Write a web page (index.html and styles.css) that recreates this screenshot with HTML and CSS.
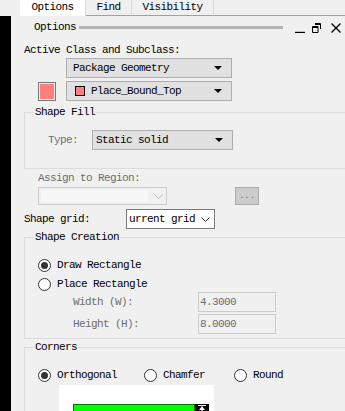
FILE: index.html
```html
<!DOCTYPE html>
<html lang="en">
<head>
    <meta charset="UTF-8">
    <title>Options</title>
    <link rel="stylesheet" href="styles.css">
</head>
<body>
    <div class="tabbar">
        <div class="tab active" style="width: 66px">Options</div>
        <div class="tab" style="width: 46px">Find</div>
        <div class="tab" style="width: 82px">Visibility</div>
        <div class="tab-rest"></div>
    </div>
    <div class="main">
        <div class="side"></div>
        <div class="panel">
            <!-- panel title bar -->
            <div class="titlebar">
                <span class="title-text">Options</span>
                <div class="grip"></div>
                <svg class="tb-icon" width="10" height="10" viewBox="0 0 10 10"><path d="M0 9.5h10" stroke="#000" stroke-width="1.4"/></svg>
                <svg class="tb-icon restore" width="9" height="10" viewBox="0 0 9 10"><path d="M3 0.5h5.5v5.5M0.5 3.5h5.5v6h-5.5z" fill="none" stroke="#000"/><path d="M0.5 4.5h5.5M3 1.5h5.5" stroke="#000"/></svg>
                <svg class="tb-icon close" width="10" height="10" viewBox="0 0 10 10"><path d="M0.5 0.5l9 9M9.5 0.5l-9 9" stroke="#000" stroke-width="1.3"/></svg>
            </div>

            <div class="label active-label">Active Class and Subclass:</div>
            <div class="row class-row">
                <div class="dropdown w166"><span>Package Geometry</span><svg class="arrow" width="8" height="4" viewBox="0 0 8 4"><path d="M0 0h8L4 4z"/></svg></div>
            </div>
            <div class="row subclass-row">
                <div class="swatch"></div>
                <div class="dropdown w166"><span class="mini-swatch"></span><span>Place_Bound_Top</span><svg class="arrow" width="8" height="4" viewBox="0 0 8 4"><path d="M0 0h8L4 4z"/></svg></div>
            </div>

            <div class="group fill-group">
                <div class="group-title">Shape Fill</div>
                <div class="row type-row">
                    <span class="label dim type-label">Type:</span>
                    <div class="dropdown w141"><span>Static solid</span><svg class="arrow" width="8" height="4" viewBox="0 0 8 4"><path d="M0 0h8L4 4z"/></svg></div>
                </div>
            </div>

            <div class="label dim region-label">Assign to Region:</div>
            <div class="row region-row">
                <div class="combo disabled">
                    <div class="combo-field"></div>
                    <svg class="chevron" width="9" height="5" viewBox="0 0 9 5"><path d="M0.5 0.5l4 4 4-4" fill="none" stroke="#b8b8b8"/></svg>
                </div>
                <div class="dots-btn">...</div>
            </div>

            <div class="row grid-row">
                <span class="label grid-label">Shape grid:</span>
                <div class="combo grid-combo">
                    <span class="combo-text">urrent grid</span>
                    <svg class="chevron" width="9" height="5" viewBox="0 0 9 5"><path d="M0.5 0.5l4 4 4-4" fill="none" stroke="#333"/></svg>
                </div>
            </div>

            <div class="group creation-group">
                <div class="group-title">Shape Creation</div>
                <div class="row radio-row first">
                    <span class="radio checked"></span><span>Draw Rectangle</span>
                </div>
                <div class="row radio-row second">
                    <span class="radio"></span><span>Place Rectangle</span>
                </div>
                <div class="row size-row">
                    <span class="label dim size-label">Width (W):</span>
                    <div class="num-input">4.3000</div>
                </div>
                <div class="row size-row second">
                    <span class="label dim size-label">Height (H):</span>
                    <div class="num-input">8.0000</div>
                </div>
            </div>

            <div class="group corners-group">
                <div class="group-title">Corners</div>
                <div class="row corners-row">
                    <span class="radio-item orth"><span class="radio checked"></span><span>Orthogonal</span></span>
                    <span class="radio-item chamfer"><span class="radio"></span><span>Chamfer</span></span>
                    <span class="radio-item round"><span class="radio"></span><span>Round</span></span>
                </div>
                <div class="preview">
                    <div class="preview-bar">
                        <div class="green"></div>
                        <div class="dim-mark">
                            <svg width="14" height="10" viewBox="0 0 14 10"><path d="M3 1.5h8" stroke="#fff"/><path d="M7 2l-3 4h6z" fill="#fff"/><path d="M7 5v5" stroke="#fff" stroke-width="1.4"/></svg>
                        </div>
                    </div>
                </div>
            </div>
        </div>
    </div>
</body>
</html>
```

FILE: styles.css
```css
* {
    box-sizing: border-box;
}
html, body {
    margin: 0;
    height: 100%;
    overflow: hidden;
}
body {
    background-color: #f0f0f0;
    font-family: "Liberation Mono", "DejaVu Sans Mono", monospace;
    font-size: 11px;
    letter-spacing: -0.6px;
    color: #000;
}
.tabbar {
    display: flex;
    height: 16px;
    padding-left: 20px;
}
.tab {
    height: 16px;
    line-height: 15px;
    text-align: center;
    border-right: 1px solid #d9d9d9;
    border-bottom: 1px solid #a0a0a0;
}
.tab.active {
    background: #fff;
    border-bottom: none;
}
.tab-rest {
    flex: 1;
    border-bottom: 1px solid #a0a0a0;
}
.main {
    display: flex;
    height: 395px;
}
.side {
    width: 11px;
    background: #000;
    flex-shrink: 0;
}
.panel {
    flex: 1;
    overflow: hidden;
}
.titlebar {
    display: flex;
    align-items: center;
    height: 22px;
}
.title-text {
    margin-left: 23px;
}
.grip {
    width: 204px;
    height: 3px;
    margin-left: 3px;
    margin-top: 1px;
    background: #b4b4b4;
}
.tb-icon {
    display: block;
    flex-shrink: 0;
    margin-left: 12px;
    margin-top: 1px;
}
.tb-icon.restore {
    margin-left: 7px;
}
.tb-icon.close {
    margin-left: 10px;
}
.label {
    line-height: 14px;
    white-space: nowrap;
}
.dim {
    color: #6d6d6d;
}
.row {
    display: flex;
    align-items: center;
}
.active-label {
    margin: 5px 0 0 13px;
}
.class-row {
    margin: 1px 0 0 55px;
}
.subclass-row {
    margin: 3px 0 0 27px;
}
.dropdown {
    display: flex;
    align-items: center;
    height: 20px;
    padding: 0 9px 0 6px;
    background: #e1e1e1;
    border: 1px solid #adadad;
}
.dropdown span {
    flex: 1;
}
.dropdown .arrow {
    display: block;
    flex-shrink: 0;
}
.w166 {
    width: 166px;
}
.w141 {
    width: 141px;
    padding-left: 3px;
}
.swatch {
    width: 18px;
    height: 19px;
    margin-right: 10px;
    background: #ff7f7f;
    border: 1px solid #777;
    box-shadow: inset 0 0 0 1px #f0f0f0;
}
.dropdown .mini-swatch {
    flex: 0 0 10px;
    height: 10px;
    margin: 0 6px 0 2px;
    background: #ff7f7f;
    border: 1px solid #000;
}
.group {
    margin: 0 -20px 0 13px;
    border: 1px solid #dcdcdc;
    border-right: none;
}
.group-title {
    width: fit-content;
    margin: -7px 0 0 9px;
    padding: 0 1px;
    line-height: 13px;
    background: #f0f0f0;
}
.fill-group {
    height: 57px;
    margin-top: 11px;
}
.type-row {
    margin: 11px 0 0 23px;
}
.type-label {
    width: 44px;
}
.region-label {
    margin: 2px 0 0 27px;
}
.region-row {
    margin: 2px 0 0 27px;
}
.combo {
    display: flex;
    align-items: center;
    height: 18px;
    border: 1px solid #ccc;
}
.combo.disabled {
    width: 129px;
    padding: 2px;
    background: #f0f0f0;
}
.combo-field {
    width: 107px;
    height: 100%;
    background: #f7f7f7;
}
.combo .chevron {
    display: block;
    margin-left: 6px;
}
.dots-btn {
    width: 24px;
    height: 18px;
    margin-left: 68px;
    background: #cccccc;
    border: 1px solid #adadad;
    color: #6d6d6d;
    font-size: 9px;
    letter-spacing: 0;
    text-align: center;
    line-height: 16px;
}
.grid-row {
    margin: 4px 0 0 13px;
}
.grid-label {
    width: 102px;
}
.grid-combo {
    width: 89px;
    height: 20px;
    padding: 0 4px 0 2px;
    background: #fff;
    border-color: #7a7a7a;
}
.combo-text {
    flex: 1;
}
.creation-group {
    height: 102px;
    margin-top: 8px;
}
.radio-row {
    height: 16px;
    margin-left: 13px;
}
.radio-row.first {
    margin-top: 13px;
}
.radio-row.second {
    margin-top: 3px;
}
.radio {
    position: relative;
    flex-shrink: 0;
    width: 13px;
    height: 13px;
    margin-right: 6px;
    border: 1px solid #333;
    border-radius: 50%;
    background: #fff;
}
.radio.checked::after {
    content: "";
    position: absolute;
    left: 2px;
    top: 2px;
    width: 7px;
    height: 7px;
    border-radius: 50%;
    background: #333;
}
.size-row {
    margin: 0 0 0 48px;
}
.size-row.second {
    margin-top: 2px;
}
.size-label {
    width: 125px;
}
.num-input {
    width: 78px;
    height: 20px;
    padding-left: 1px;
    line-height: 18px;
    background: #f0f0f0;
    border: 1px solid #ccc;
    color: #6d6d6d;
}
.corners-group {
    height: 80px;
    margin-top: 8px;
}
.corners-row {
    height: 16px;
    margin: 13px 0 0 13px;
}
.radio-item {
    display: flex;
    align-items: center;
}
.radio-item.orth {
    width: 106px;
}
.radio-item.chamfer {
    width: 90px;
}
.preview {
    width: 155px;
    height: 40px;
    margin: 2px 0 0 34px;
    padding: 19px 0 0 14px;
    background: #fff;
}
.preview-bar {
    display: flex;
}
.green {
    width: 122px;
    height: 20px;
    background: #00ff00;
    border: 1px solid #007800;
}
.dim-mark {
    width: 14px;
    height: 20px;
    background: #000;
}
.dim-mark svg {
    display: block;
}
```
